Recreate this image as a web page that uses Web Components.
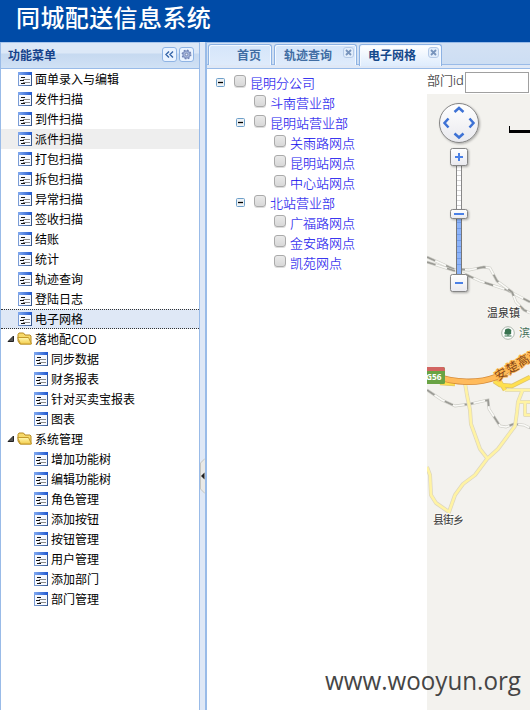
<!DOCTYPE html>
<html lang="zh-CN">
<head>
<meta charset="utf-8">
<title>同城配送信息系统</title>
<style>
html,body{margin:0;height:100%;overflow:hidden}
body{font-family:"Open Sans","Noto Sans CJK SC",sans-serif;font-size:12px;color:#000}
</style>
</head>
<body>
<app-shell></app-shell>
<script>
const define=(name,html,setup)=>customElements.define(name,class extends HTMLElement{
  constructor(){super();this.attachShadow({mode:'open'}).innerHTML=html;}
  connectedCallback(){if(setup)setup(this,this.shadowRoot);}
});

/* small form icon used by leaf menu entries */
define('form-icon',`<style>:host{display:block;width:14px;height:14px}svg{display:block}</style>
<svg width="14" height="14" shape-rendering="crispEdges"><defs><linearGradient id="a"><stop stop-color="#82aaf0"/><stop offset="1" stop-color="#2058d0"/></linearGradient><linearGradient id="b"><stop stop-color="#7d9fd8"/><stop offset="1" stop-color="#35558c"/></linearGradient></defs>
<rect width="14" height="14" fill="url(#b)"/><rect width="14" height="3" fill="url(#a)"/><rect x="1" y="3" width="12" height="10" fill="#f6f9ff"/><path d="M3 5.500h4M2 8.500h4M3 11.500h4" stroke="#111"/><path d="M5 7.500h7M5 10.500h7" stroke="#8b8b8b"/></svg>`);

define('folder-icon',`<style>:host{display:block;width:16px;height:14px}svg{display:block}</style>
<svg width="16" height="14"><defs><linearGradient id="f" x2="0" y2="1"><stop stop-color="#fff8b0"/><stop offset="1" stop-color="#f3cc4c"/></linearGradient></defs><path d="M1 9V2.500l1-1.500h4.500l1.500 2h5l1 1v8H3z" fill="#f6d96a" stroke="#b78a22"/><path d="M.7 5.500h10.800l3 6.500H3.500z" fill="url(#f)" stroke="#c49a2c"/></svg>`);

define('menu-item',`<style>
:host{display:flex;height:20px;align-items:center;box-sizing:border-box;padding-left:17px;white-space:nowrap;line-height:18px}
:host([sub]){padding-left:33px}
:host([group]){padding-left:6px}
:host([hot]){background:#eee}
:host([on]){background:#dfe8f6;border:dotted #333;border-width:1px 0}
.g{display:none;width:10px;height:10px}
:host([group]) .g{display:block}
folder-icon{display:none}
:host([group]) folder-icon{display:block}
:host([group]) form-icon{display:none}
span{margin-left:3px;padding-top:1px}:host([group]) span{margin-left:2px}
</style><svg class="g"><path d="M6.500 2v5.500H1z" fill="#555" stroke="#222"/></svg><folder-icon></folder-icon><form-icon></form-icon><span><slot></slot></span>`);

define('tool-button',`<style>:host{display:block;width:15px;height:15px}svg{display:block}</style><svg width="15" height="15"><rect x=".5" y=".5" width="14" height="14" rx="2.500" fill="#eaf3ff" stroke="#8fb4e4"/><g></g></svg>`,
(h,r)=>{r.querySelector('g').innerHTML=h.hasAttribute('gear')
 ?'<circle cx="7.500" cy="7.500" r="3.400" fill="#a5b6dc" stroke="#8a9bc8" stroke-width="1.500"/><circle cx="7.500" cy="7.500" r="4.300" fill="none" stroke="#7184b4" stroke-width="1.300" stroke-dasharray="1.690 1.690"/><circle cx="7.500" cy="7.500" r="1.300" fill="#e2eafa" stroke="#66749c" stroke-width=".7"/>'
 :'<path d="M7 4.500L4 7.500l3 3M11 4.500L8 7.500l3 3" fill="none" stroke="#3565a8" stroke-width="1.400"/>';});

define('side-menu',`<style>
:host{display:flex;flex-direction:column;width:200px;box-sizing:border-box;border:solid #99bbe8;border-width:0 1px;background:#fff}
header{display:flex;align-items:center;height:27px;box-sizing:border-box;padding:0 5px 2px 7px;gap:2px;border-bottom:1px solid #99bbe8;border-top:1px solid #a9c6ec;background:linear-gradient(#dce8f7 0 10px,#c6d9f0 11px,#d0e1f5)}
b{flex:1;color:#15428b}
</style><header><b>功能菜单</b><tool-button></tool-button><tool-button gear></tool-button></header>
<menu-item>面单录入与编辑</menu-item><menu-item>发件扫描</menu-item><menu-item>到件扫描</menu-item><menu-item hot>派件扫描</menu-item><menu-item>打包扫描</menu-item><menu-item>拆包扫描</menu-item><menu-item>异常扫描</menu-item><menu-item>签收扫描</menu-item><menu-item>结账</menu-item><menu-item>统计</menu-item><menu-item>轨迹查询</menu-item><menu-item>登陆日志</menu-item><menu-item on>电子网格</menu-item>
<menu-item group>落地配COD</menu-item><menu-item sub>同步数据</menu-item><menu-item sub>财务报表</menu-item><menu-item sub>针对买卖宝报表</menu-item><menu-item sub>图表</menu-item>
<menu-item group>系统管理</menu-item><menu-item sub>增加功能树</menu-item><menu-item sub>编辑功能树</menu-item><menu-item sub>角色管理</menu-item><menu-item sub>添加按钮</menu-item><menu-item sub>按钮管理</menu-item><menu-item sub>用户管理</menu-item><menu-item sub>添加部门</menu-item><menu-item sub>部门管理</menu-item>`);

define('split-bar',`<style>:host{display:flex;width:5px;background:#dfe8f6;align-items:center}svg{display:block;margin-top:200px}</style><svg width="5" height="36"><path d="M5 .5L.5 5v26L5 35.500" fill="#e9e9e7" stroke="#c5c5c0"/><path d="M4.500 14.500v7L1 18z" fill="#222"/></svg>`);

define('tab-item',`<style>
:host{display:flex;box-sizing:border-box;height:21px;border:1px solid #8db2e3;border-bottom:0;border-radius:3px 3px 0 0;box-shadow:inset 1px 1px #f4f9ff,inset -1px 0 #f4f9ff;background:linear-gradient(#d5e5fa,#dfebfb);color:#416da3;font-weight:bold;line-height:21px;padding-left:9px;position:relative;white-space:nowrap}
:host([on]){height:22px;background:linear-gradient(#fff,#deecfd);color:#15498b}
svg{display:none;position:absolute;right:2px;top:2px}:host([closable]) svg{display:block}
</style><slot></slot><svg width="11" height="11"><rect x=".5" y=".5" width="10" height="10" rx="2.500" fill="#e2edfb" stroke="#b5cae7"/><path d="M3 3l5 5M8 3L3 8" stroke="#7894bc" stroke-width="1.800"/></svg>`);

define('tab-strip',`<style>
:host{display:flex;gap:2px;height:27px;box-sizing:border-box;padding:1px 0 0 1px;border-top:1px solid #99bbe8;align-items:flex-start;background:linear-gradient(#d3e1f3,#cddef3 21px,#99bbe8 21px,#99bbe8 22px,#dfe8f6 22px,#dfe8f6 25px,#99bbe8 25px);background-size:100% 26px}
</style><tab-item style="width:64px;padding-left:28px">首页</tab-item><tab-item closable style="width:83px">轨迹查询</tab-item><tab-item on closable style="width:83px;padding-left:8px">电子网格</tab-item>`);

define('tree-row',`<style>
:host{display:flex;height:20px;align-items:center;color:#1712ee;font-size:13px;white-space:nowrap}
:host([l1]){margin-left:20px}:host([l2]){margin-left:40px}
.t{width:9px;height:9px;margin-right:9px;margin-top:-1px;visibility:hidden}:host([open]) .t{visibility:visible}
i{width:10px;height:10px;border:1px solid #aaa;border-radius:3px;background:linear-gradient(#e9e9e9,#d8d8d8);margin:-4px 4px 0 0;box-shadow:0 1px #ddd}
span{font-family:"Noto Sans CJK SC",sans-serif;font-weight:300;-webkit-text-stroke:.1px;line-height:18px;margin-top:-1px}
</style><svg class="t"><rect x=".5" y=".5" width="8" height="8" rx="1" fill="#eef2f5" stroke="#6d9fc9"/><path d="M2 4.500h5" stroke="#000" stroke-width="1.300"/></svg><i></i><span><slot></slot></span>`);

define('dept-tree',`<style>:host{display:block;width:220px;box-sizing:border-box;padding:4px 0 0 9px;background:#fff}</style>
<tree-row open>昆明分公司</tree-row><tree-row l1>斗南营业部</tree-row><tree-row l1 open>昆明站营业部</tree-row><tree-row l2>关雨路网点</tree-row><tree-row l2>昆明站网点</tree-row><tree-row l2>中心站网点</tree-row><tree-row l1 open>北站营业部</tree-row><tree-row l2>广福路网点</tree-row><tree-row l2>金安路网点</tree-row><tree-row l2>凯苑网点</tree-row>`);

define('search-bar',`<style>:host{display:flex;height:25px;box-sizing:border-box;padding-top:3px;font-size:13px;color:#333;overflow:hidden;white-space:nowrap}
span{width:38px;line-height:19px;margin-top:-1px;font-weight:300;-webkit-text-stroke:.15px}input{box-sizing:border-box;width:64px;height:21px;border:1px solid #a0a0a0;margin:0;padding:0;flex:none}</style><span>部门id</span><input aria-label="部门id">`);

define('grid-map',`<style>:host{display:block;flex:1;background:#f3f2ee;overflow:hidden}svg{display:block}text{font-family:"Noto Sans CJK SC",sans-serif}</style>
<svg width="103" height="616" viewBox="427 94 103 616">
<defs><linearGradient id="w" x2="0" y2="1"><stop stop-color="#fff"/><stop offset="1" stop-color="#e9e9ee"/></linearGradient>
<filter id="s" x="-30%" y="-30%" width="160%" height="160%"><feDropShadow dx="1" dy="1" stdDeviation="1" flood-opacity=".3"/></filter></defs>
<g fill="none" id="rail"></g>
<g fill="none" stroke-linejoin="round" id="road"></g>
<path d="M435 376C455 383 478 384 496 377C506 372 517 363 534 354" fill="none" stroke="#d68d3b" stroke-width="6.500"/>
<path d="M435 376C455 383 478 384 496 377C506 372 517 363 534 354" fill="none" stroke="#ffbb5c" stroke-width="4.800"/>
<rect x="420" y="367" width="25" height="17" rx="1.500" fill="#69a344"/><path d="M420 367h23.500l1.500 1.500V371h-25z" fill="#d26561"/><text x="426" y="380" font-size="9.500" font-weight="bold" fill="#fff" style="font-family:'Open Sans',sans-serif" textLength="15.500" lengthAdjust="spacingAndGlyphs">G56</text>
<g font-size="12" fill="#844417" stroke="#ffb84f" stroke-width="2" paint-order="stroke"><text transform="translate(498 381) rotate(-31)" textLength="51">安楚高速</text></g>
<g fill="#333" font-size="11" stroke="#f8f7f3" stroke-width="2" paint-order="stroke"><text x="487" y="317" textLength="33">温泉镇</text><text x="433" y="524" textLength="31">县街乡</text><text x="519" y="337" fill="#46705a">滨</text></g>
<circle cx="508" cy="333" r="6.300" fill="#fff" stroke="#a9b5aa"/><path d="M508 328.500c3 0 4 2 3 3.500 1 2-1 3-2.500 2.500v1h3v1h-7v-1h3v-1c-3 .5-4-1.500-2.500-3-.5-2 1-3 3-3z" fill="#397450"/>
<path d="M509.500 126v5.500H530" fill="none" stroke="#000" stroke-width="1"/><path d="M509 131.500h21" stroke="#000" stroke-width="3"/>
<circle cx="459" cy="123" r="19.500" fill="url(#w)" stroke="#858585" filter="url(#s)"/>
<path d="M454.500 112l4.500-4 4.500 4M454.500 133.500l4.500 4 4.500-4M448.500 118.500l-4 4.500 4 4.500M469.500 118.500l4 4.500-4 4.500" fill="none" stroke="#3e72d5" stroke-width="2.500"/>
<rect x="456.500" y="165" width="5" height="50" fill="#fff" stroke="#888"/><path d="M457 170.500h4m-4 5h4m-4 5h4m-4 5h4m-4 5h4m-4 5h4m-4 5h4m-4 5h4" stroke="#d5d5d5"/>
<rect x="456.500" y="215" width="5" height="60" fill="#8cb4fa" stroke="#777"/><path d="M457 222.500h4m-4 6h4m-4 6h4m-4 6h4m-4 6h4m-4 6h4m-4 6h4m-4 6h4" stroke="#6f9ae8"/>
<g fill="url(#w)" stroke="#858585" filter="url(#s)"><rect x="450.500" y="148.500" width="17" height="17" rx="2"/><rect x="450.500" y="274.500" width="17" height="17" rx="2"/><rect x="450.500" y="209.500" width="17" height="9" rx="2"/></g>
<path d="M455 157h8M459 153v8M455 283h8M454 214h10" stroke="#4a80e6" stroke-width="2"/>
</svg>`,(h,r)=>{
  const line=(d,c,w,x='')=>`<path d="${d}" stroke="${c}" stroke-width="${w}" ${x}/>`;
  r.getElementById('rail').innerHTML=['M427 257L449 267 480 281 507 290 530 302','M427 262L455 271','M456 269L469 270 484 267 490 268 497 281 512 292 516 302 524 310 530 313','M427 390L442 400 455 406 470 404 488 400 489 409 500 426 506 427 514 424 524 425 530 428'].map(d=>line(d,'#cdcdc6',2.8)+line(d,'#fafaf7',1.6)+line(d,'#9a9a94',1.8,'stroke-dasharray="9 12"')).join('');
  const r2=['M465 383L467 395 470 410 471 424 475 435 480 449 487 458','M427 467L430 475 431 495 436 503 449 512 455 495 463 484 475 475 487 459 498 449 515 426 517 412 518 402 523 389','M530 415H525V402','M518 402H530','M505 390H530'];
  const r3=['M440 383L455 384','M494 381L500 385 512 386 530 377','M499 380L505 390'];
  r.getElementById('road').innerHTML=r2.map(d=>line(d,'#dcd6c0',4)).join('')+r2.map(d=>line(d,'#fff3a3',2.6)).join('')+r3.map(d=>line(d,'#dfc36a',4.6)).join('')+r3.map(d=>line(d,'#ffe04e',3)).join('');
});

define('app-shell',`<style>
:host{display:flex;flex-direction:column;width:530px;height:710px;overflow:hidden;position:relative;background:#dfe8f6}
h1{margin:0;height:42px;box-sizing:border-box;padding-left:16px;background:#004ba7;color:#fff;font-size:24px;line-height:33px;font-family:"Noto Sans CJK SC",sans-serif;font-weight:500;letter-spacing:.4px;flex:none}
.body{display:flex;flex:1;min-height:0}
.main{flex:1;display:flex;flex-direction:column;border-left:2px solid #99bbe8;min-width:0}
.content{flex:1;display:flex;min-height:0;background:#fff}
.right{flex:1;display:flex;flex-direction:column;min-width:0}
.mark{position:absolute;left:324px;top:660px}
.mark text{font:25px "Open Sans",sans-serif;fill:#454545}
</style><h1>同城配送信息系统</h1><div class="body"><side-menu></side-menu><split-bar></split-bar><div class="main"><tab-strip></tab-strip><div class="content"><dept-tree></dept-tree><div class="right"><search-bar></search-bar><grid-map></grid-map></div></div></div></div>
<svg class="mark" width="204" height="46"><text x="1" y="30" textLength="196" lengthAdjust="spacingAndGlyphs">www.wooyun.org</text></svg>`);
</script>
</body>
</html>
